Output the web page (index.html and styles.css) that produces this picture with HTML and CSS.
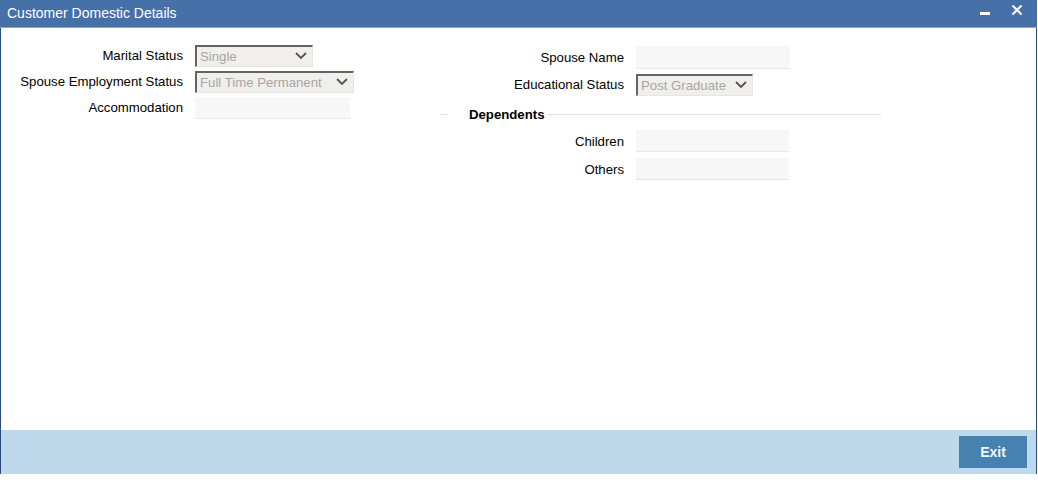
FILE: index.html
```html
<!DOCTYPE html>
<html lang="en">
<head>
  <meta charset="UTF-8">
  <title>Customer Domestic Details</title>
  <link rel="stylesheet" href="styles.css">
</head>
<body>
  <div class="window">
    <header class="titlebar">
      <span class="title">Customer Domestic Details</span>
      <span class="controls">
        <span class="minimize"></span>
        <svg class="close" width="12" height="12" viewBox="0 0 12 12">
          <path d="M1.5 1.5 L10.5 10.5 M10.5 1.5 L1.5 10.5" stroke="#fff" stroke-width="2.2" fill="none"/>
        </svg>
      </span>
    </header>

    <main class="content">
      <section class="column">
        <div class="fields left">
          <label>Marital Status</label>
          <div class="select w118"><span>Single</span><svg width="12" height="8" viewBox="0 0 12 8"><path d="M1 1 L6 6 L11 1" stroke="#555" stroke-width="1.8" fill="none"/></svg></div>

          <label>Spouse Employment Status</label>
          <div class="select w159"><span>Full Time Permanent</span><svg width="12" height="8" viewBox="0 0 12 8"><path d="M1 1 L6 6 L11 1" stroke="#555" stroke-width="1.8" fill="none"/></svg></div>

          <label>Accommodation</label>
          <div class="input w155"></div>
        </div>
      </section>

      <section class="column right">
        <div class="fields top">
          <label>Spouse Name</label>
          <div class="input w154 tall"></div>

          <label>Educational Status</label>
          <div class="select w117"><span>Post Graduate</span><svg width="12" height="8" viewBox="0 0 12 8"><path d="M1 1 L6 6 L11 1" stroke="#555" stroke-width="1.8" fill="none"/></svg></div>
        </div>

        <div class="legend"><span>Dependents</span></div>

        <div class="fields bottom">
          <label>Children</label>
          <div class="input w153"></div>

          <label>Others</label>
          <div class="input w153"></div>
        </div>
      </section>
    </main>

    <footer class="footer">
      <button class="btn">Exit</button>
    </footer>
  </div>
</body>
</html>
```

FILE: styles.css
```css
:root {
  --title: #4670a8;
  --frame: #284b82;
  --footer: #bed9ec;
  --button: #4781b0;
  --field: #f7f7f7;
  --select: #f0efeb;
}

body {
  margin: 0;
  font-family: "Liberation Sans", Arial, sans-serif;
  font-size: 13.2px;
  color: #000;
  background: #fff;
}

.window {
  width: 1037px;
  height: 474px;
  box-sizing: border-box;
  display: flex;
  flex-direction: column;
  border-left: 1px solid var(--frame);
  border-right: 1px solid var(--frame);
}

.titlebar {
  height: 28px;
  flex: none;
  display: flex;
  align-items: center;
  justify-content: space-between;
  margin: 0 -1px;
  padding: 0 14px 0 7px;
  background-color: var(--title);
  border-bottom: 1px solid #8ea6c6;
  box-sizing: border-box;
  color: #fff;
  font-size: 14px;
}

.title {
  padding-bottom: 2px;
}

.controls {
  display: flex;
  align-items: flex-start;
  gap: 21px;
  margin-top: -11px;
}

.minimize {
  display: block;
  width: 10px;
  height: 3px;
  margin-top: 11px;
  background: #fff;
}

.close {
  display: block;
  margin-top: 3px;
}

.content {
  flex: 1;
  display: flex;
}

.column {
  width: 440px;
  display: flex;
  flex-direction: column;
}

.column.right {
  padding-left: 1px;
}

.fields {
  display: grid;
  grid-template-columns: 182px auto;
  column-gap: 12px;
  align-items: center;
  justify-items: start;
}

.fields label {
  justify-self: end;
  white-space: nowrap;
}

.fields.left {
  padding-top: 16px;
  grid-auto-rows: 23px;
  row-gap: 3px;
}

.fields.top {
  padding-top: 18px;
  grid-auto-rows: 23px;
  row-gap: 4px;
}

.fields.bottom {
  margin-top: 6px;
  grid-auto-rows: 22px;
  row-gap: 6px;
}

.select {
  height: 22px;
  box-sizing: border-box;
  display: flex;
  align-items: center;
  justify-content: space-between;
  padding: 0 5px 0 3px;
  background: var(--select);
  border-top: 2px solid #646464;
  border-left: 2px solid #646464;
  border-right: 1px solid #e6e5e1;
  border-bottom: 1px solid #e6e5e1;
  color: #a6a6a6;
}

.select svg {
  display: block;
}

.input {
  height: 22px;
  box-sizing: border-box;
  background: var(--field);
  border-bottom: 1px solid #e8e8e8;
}

.input.tall {
  height: 23px;
}

.w118 { width: 118px; }
.w159 { width: 159px; }
.w155 { width: 155px; }
.w154 { width: 154px; }
.w153 { width: 153px; }
.w117 { width: 117px; }

.legend {
  margin-top: 8px;
  margin-left: -1px;
  width: 440px;
  height: 20px;
  display: flex;
  align-items: center;
  font-weight: bold;
}

.legend::before,
.legend::after {
  content: "";
  height: 1px;
  background: #e2e2e2;
}

.legend::before {
  width: 7px;
}

.legend::after {
  flex: 1;
}

.legend span {
  padding: 0 3px 0 21px;
}

.footer {
  height: 44px;
  flex: none;
  display: flex;
  justify-content: flex-end;
  align-items: flex-start;
  padding: 6px 9px 0 0;
  box-sizing: border-box;
  background: var(--footer);
}

.btn {
  width: 68px;
  height: 32px;
  border: none;
  background: var(--button);
  color: #eef7ff;
  font-family: "Liberation Sans", Arial, sans-serif;
  font-size: 14px;
  font-weight: bold;
}
```
